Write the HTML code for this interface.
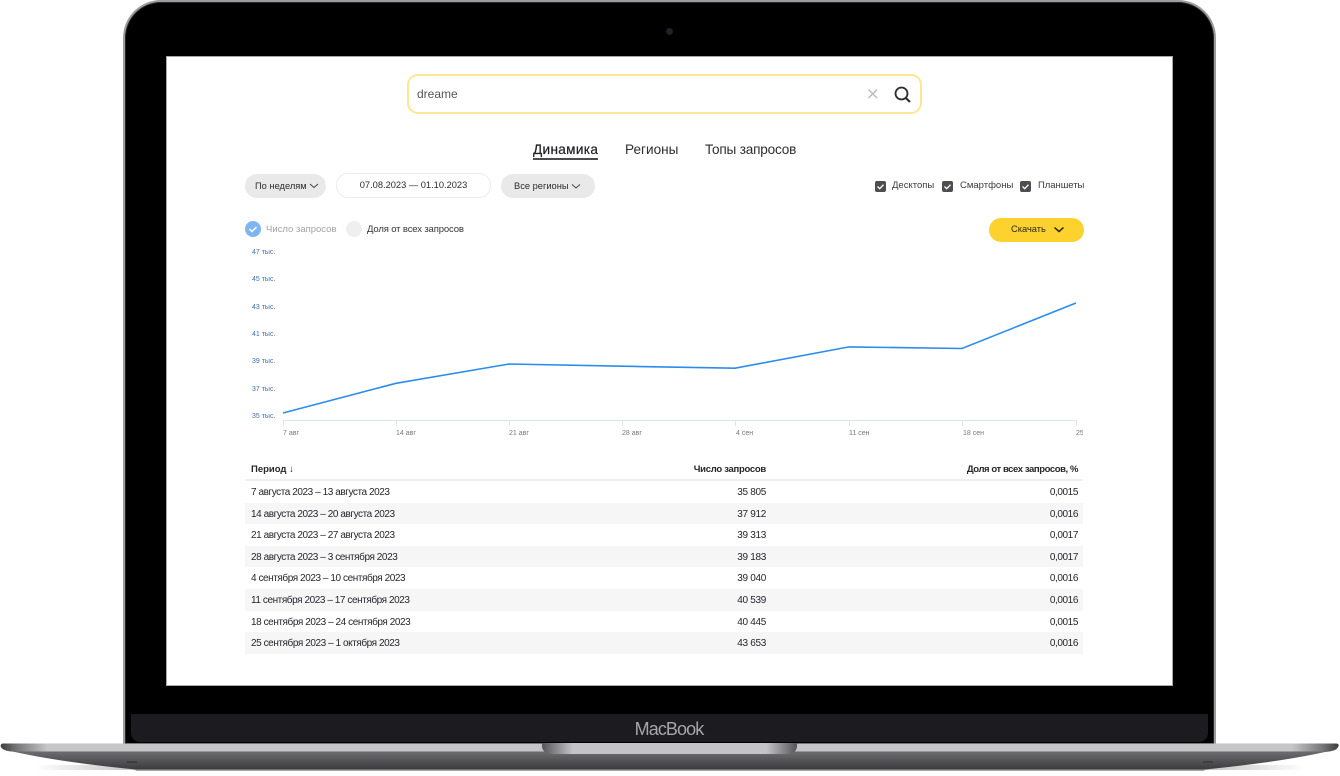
<!DOCTYPE html>
<html lang="ru">
<head>
<meta charset="utf-8">
<title>MacBook</title>
<style>
html,body{margin:0;padding:0;background:#fff}
body{width:1340px;height:776px;position:relative;overflow:hidden;font-family:"Liberation Sans",sans-serif;color:#1f1f24}
.a{position:absolute;white-space:nowrap}
#lid{left:123px;top:0;width:1093px;height:744px;box-sizing:border-box;background:#000;border:2.500px solid #9c9c9e;border-bottom:0;border-radius:38px 38px 0 0;box-shadow:inset 0 0 0 1px #262628}
#screen{left:166px;top:56px;width:1007px;height:630px;background:#fff;overflow:hidden}
#edge{left:166px;top:56px;width:1007px;height:630px;box-shadow:inset 0 0 0 1px #a8a8aa;pointer-events:none}
#chin{left:131px;top:714px;width:1077px;height:28px;background:#1c1c20;border-radius:0 0 9px 9px}
#cam{left:667px;top:29px;width:5px;height:5px;border-radius:50%;background:#1d2430;box-shadow:0 0 0 1px #202022}
#mb{left:0;top:719px;width:1338px;text-align:center;font-size:18px;color:#a6a6a8;letter-spacing:-.9px}
#s{position:absolute;left:-166px;top:-56px;width:1340px;height:776px;filter:blur(.35px)}
.row{position:absolute;left:245px;width:838px;height:21.6px}
.shade{background:#f6f6f6}
.c1,.c2,.c3{position:absolute;top:6px;font-size:10px;line-height:12px;white-space:nowrap;color:#26262b}
.c1{left:6px;letter-spacing:-.43px}.c2{right:317px;letter-spacing:-.3px}.c3{right:5px;letter-spacing:-.4px}
.pill{position:absolute;height:24px;border-radius:12px;font-size:9.300px;line-height:24px;color:#2b2b30;box-sizing:border-box;white-space:nowrap}
.cb{position:absolute;width:11px;height:11px;border-radius:2px;background:#4d4d52}
.y{position:absolute;left:252px;font-size:7px;line-height:8px;color:#3f6fa8;white-space:nowrap}
.x{position:absolute;top:430px;font-size:7px;line-height:8px;color:#777;white-space:nowrap}
</style>
</head>
<body>
<div class="a" id="lid"></div>
<div class="a" id="screen">
<div id="s">
  <div class="a" style="left:407px;top:74px;width:515px;height:40px;box-sizing:border-box;border:2px solid #fee794;border-radius:11px;background:#fff"></div>
  <div class="a" style="left:417px;top:87px;font-size:12px;line-height:14px;color:#55555a">dreame</div>
  <svg class="a" style="left:860px;top:80px" width="60" height="30" viewBox="0 0 60 30" fill="none">
    <path d="M8.500 9.500l8.500 8.500M17 9.500l-8.500 8.500" stroke="#b9b9bb" stroke-width="1.400"/>
    <circle cx="41.500" cy="13.500" r="6" stroke="#2c2c30" stroke-width="1.800"/>
    <path d="M45.800 18l4.200 4" stroke="#2c2c30" stroke-width="2.200"/>
  </svg>

  <div class="a" style="left:533px;top:142px;font-size:13.600px;line-height:16px;letter-spacing:.33px;color:#1f1f23;-webkit-text-stroke:.2px #1f1f23">Динамика</div>
  <div class="a" style="left:533px;top:158px;width:65px;height:1.500px;background:#4a4a50"></div>
  <div class="a" style="left:625px;top:142px;font-size:13.600px;line-height:16px;color:#2e2e32">Регионы</div>
  <div class="a" style="left:705px;top:142px;font-size:13.600px;line-height:16px;letter-spacing:-.2px;color:#2e2e32">Топы запросов</div>

  <div class="pill" style="left:245px;top:174px;width:81px;background:#e9e9e9;padding-left:10px">По неделям</div>
  <svg class="a" style="left:309px;top:182px" width="11" height="8" fill="none"><path d="M1 2l4 3.500L9 2" stroke="#444" stroke-width="1"/></svg>
  <div class="pill" style="left:336px;top:173px;width:155px;height:25px;border:1px solid #ececec;background:#fff;text-align:center;line-height:23px">07.08.2023 — 01.10.2023</div>
  <div class="pill" style="left:501px;top:174px;width:94px;background:#e9e9e9;padding-left:13px">Все регионы</div>
  <svg class="a" style="left:571px;top:182px" width="11" height="8" fill="none"><path d="M1 2.500l4 3.500 4-3.500" stroke="#444" stroke-width="1"/></svg>

  <div class="cb" style="left:875px;top:181px"></div>
  <div class="cb" style="left:942px;top:181px"></div>
  <div class="cb" style="left:1020px;top:181px"></div>
  <svg class="a" style="left:875px;top:181px" width="160" height="11" fill="none" stroke="#fff" stroke-width="1.300">
    <path d="M2.500 5.500l2.200 2.200 3.800-4"/><path d="M69.500 5.500l2.200 2.200 3.800-4"/><path d="M147.500 5.500l2.200 2.200 3.800-4"/>
  </svg>
  <div class="a" style="left:892px;top:180px;font-size:9.500px;line-height:12px;color:#3b3b40">Десктопы</div>
  <div class="a" style="left:960px;top:180px;font-size:9.500px;line-height:12px;color:#3b3b40">Смартфоны</div>
  <div class="a" style="left:1038px;top:180px;font-size:9.500px;line-height:12px;letter-spacing:-.05px;color:#3b3b40">Планшеты</div>

  <div class="a" style="left:245px;top:221px;width:16px;height:16px;border-radius:50%;background:#7fb5f3"></div>
  <svg class="a" style="left:245px;top:221px" width="16" height="16" fill="none"><path d="M4.500 8l2.500 2.500 4.500-4.500" stroke="#fff" stroke-width="1.500"/></svg>
  <div class="a" style="left:266px;top:224px;font-size:9.500px;line-height:12px;color:#a3a3a6">Число запросов</div>
  <div class="a" style="left:346px;top:221px;width:16px;height:16px;border-radius:50%;background:#efefef"></div>
  <div class="a" style="left:367px;top:224px;font-size:9.500px;line-height:12px;letter-spacing:-.14px;color:#35353a">Доля от всех запросов</div>

  <div class="pill" style="left:989px;top:218px;width:95px;height:24px;background:#fdd22e;padding-left:22px;line-height:23px;color:#2a2a20">Скачать</div>
  <svg class="a" style="left:1052px;top:225px" width="14" height="10" fill="none"><path d="M2.500 2.500l4.500 4 4.500-4" stroke="#1d1d1d" stroke-width="1.500"/></svg>

  <div class="y" style="top:249px">47 тыс.</div>
  <div class="y" style="top:276px">45 тыс.</div>
  <div class="y" style="top:304px">43 тыс.</div>
  <div class="y" style="top:331px">41 тыс.</div>
  <div class="y" style="top:358px">39 тыс.</div>
  <div class="y" style="top:386px">37 тыс.</div>
  <div class="y" style="top:413px">35 тыс.</div>

  <svg class="a" style="left:240px;top:290px" width="850" height="145" viewBox="240 290 850 145" fill="none">
    <path d="M283 420.500H1076M283.500 420v6M396.500 420v6M509.500 420v6M622.500 420v6M735.500 420v6M849.500 420v6M962.500 420v6M1076.500 420v6" stroke="#dbe6f5" stroke-width="1"/>
    <path d="M283 413L396 383.300 509 364 622 366.200 735 368.200 849 346.900 962 348.500 1076 303" stroke="#2b8ceb" stroke-width="1.600"/>
  </svg>
  <div class="x" style="left:283px">7 авг</div>
  <div class="x" style="left:396px">14 авг</div>
  <div class="x" style="left:509px">21 авг</div>
  <div class="x" style="left:622px">28 авг</div>
  <div class="x" style="left:736px">4 сен</div>
  <div class="x" style="left:849px">11 сен</div>
  <div class="x" style="left:963px">18 сен</div>
  <div class="a" style="left:1076px;top:430px;width:7px;overflow:hidden;font-size:7px;line-height:8px;color:#777">25</div>

  <div class="row" style="top:461px;height:20px;border-bottom:2px solid #efefef;box-sizing:border-box">
    <div class="c1" style="top:3px;font-weight:bold;font-size:9.500px;letter-spacing:0">Период ↓</div>
    <div class="c2" style="top:3px;font-weight:bold;font-size:9.500px;letter-spacing:-.28px">Число запросов</div>
    <div class="c3" style="top:3px;font-weight:bold;font-size:9.500px;letter-spacing:-.42px">Доля от всех запросов, %</div>
  </div>
  <div class="row" style="top:481px"><div class="c1">7 августа 2023 – 13 августа 2023</div><div class="c2">35 805</div><div class="c3">0,0015</div></div>
  <div class="row shade" style="top:502.600px"><div class="c1">14 августа 2023 – 20 августа 2023</div><div class="c2">37 912</div><div class="c3">0,0016</div></div>
  <div class="row" style="top:524.200px"><div class="c1">21 августа 2023 – 27 августа 2023</div><div class="c2">39 313</div><div class="c3">0,0017</div></div>
  <div class="row shade" style="top:545.800px"><div class="c1">28 августа 2023 – 3 сентября 2023</div><div class="c2">39 183</div><div class="c3">0,0017</div></div>
  <div class="row" style="top:567.400px"><div class="c1">4 сентября 2023 – 10 сентября 2023</div><div class="c2">39 040</div><div class="c3">0,0016</div></div>
  <div class="row shade" style="top:589px"><div class="c1">11 сентября 2023 – 17 сентября 2023</div><div class="c2">40 539</div><div class="c3">0,0016</div></div>
  <div class="row" style="top:610.600px"><div class="c1">18 сентября 2023 – 24 сентября 2023</div><div class="c2">40 445</div><div class="c3">0,0015</div></div>
  <div class="row shade" style="top:632.200px"><div class="c1">25 сентября 2023 – 1 октября 2023</div><div class="c2">43 653</div><div class="c3">0,0016</div></div>
</div>
</div>
<div class="a" id="edge"></div>
<div class="a" id="cam"></div>
<div class="a" id="chin"></div>
<div class="a" id="mb">MacBook</div>

<svg class="a" style="left:0;top:740px" width="1340" height="36" viewBox="0 740 1340 36">
  <defs>
    <linearGradient id="top" x1="0" x2="1" y1="0" y2="0">
      <stop offset="0" stop-color="#3d3d40"/><stop offset=".012" stop-color="#77777a"/><stop offset=".035" stop-color="#c6c6c9"/>
      <stop offset=".965" stop-color="#c6c6c9"/><stop offset=".988" stop-color="#77777a"/><stop offset="1" stop-color="#3d3d40"/>
    </linearGradient>
    <linearGradient id="body" x1="0" x2="0" y1="0" y2="1">
      <stop offset="0" stop-color="#3f3f42"/><stop offset=".35" stop-color="#6a6a6e"/><stop offset="1" stop-color="#3b3b3e"/>
    </linearGradient>
    <linearGradient id="notch" x1="0" x2="1" y1="0" y2="0">
      <stop offset="0" stop-color="#55555a"/><stop offset=".12" stop-color="#c4c4c7"/><stop offset=".88" stop-color="#c4c4c7"/><stop offset="1" stop-color="#55555a"/>
    </linearGradient>
    <linearGradient id="shl" x1="0" x2="1" y1="0" y2="0">
      <stop offset="0" stop-color="#aaa" stop-opacity="0"/><stop offset="1" stop-color="#aaa" stop-opacity=".7"/>
    </linearGradient>
    <linearGradient id="shr" x1="1" x2="0" y1="0" y2="0">
      <stop offset="0" stop-color="#aaa" stop-opacity="0"/><stop offset="1" stop-color="#aaa" stop-opacity=".7"/>
    </linearGradient>
  </defs>
  <rect x="35" y="765" width="100" height="5" fill="url(#shl)"/>
  <rect x="1205" y="765" width="100" height="5" fill="url(#shr)"/>
  <path d="M3 743.500H1336Q1340 744 1338 747Q1336 751 1325 752Q1280 762 1205 769.500H135Q60 762 15 752Q3 750 1 747Q0 744 3 743.500Z" fill="url(#body)"/>
  <path d="M3 743.500H1336Q1340 744 1338 747Q1336 751 1328 751.500H12Q3 751 1 747Q0 744 3 743.500Z" fill="url(#top)"/>
  <path d="M135 769.500H1205L1204 771H136Z" fill="#a6a6a8"/>
  <path d="M542 743H797V747Q796 754 785 754H554Q543 754 542 747Z" fill="url(#notch)"/>
  <rect x="127" y="761.500" width="10" height="1" fill="#2a2a2c"/>
  <rect x="1203" y="761.500" width="10" height="1" fill="#2a2a2c"/>
</svg>
</body>
</html>
